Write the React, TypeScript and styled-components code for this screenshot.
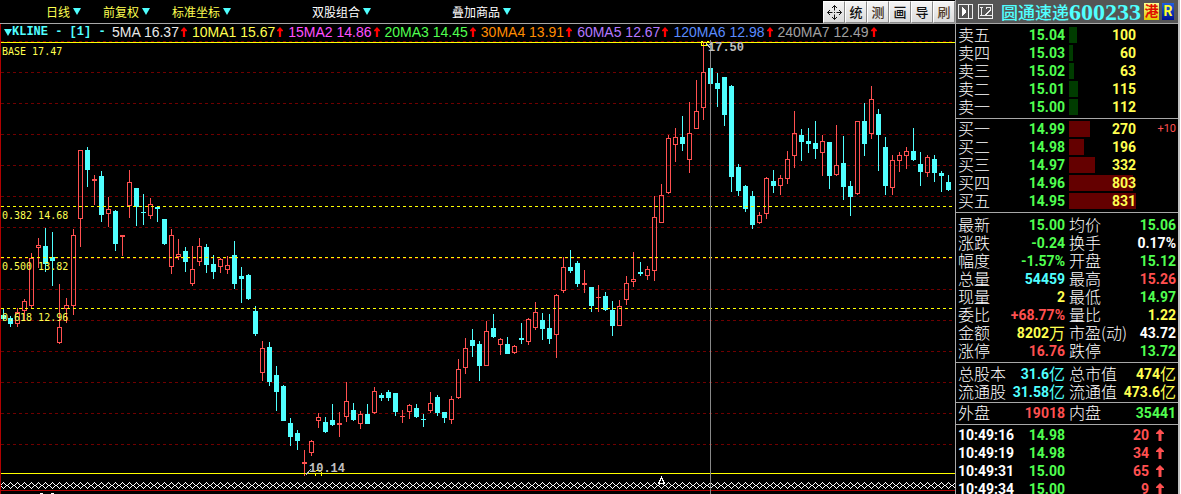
import React from "react";
import styled, { createGlobalStyle } from "styled-components";

const CJK = '"Noto Sans CJK SC", sans-serif';
const NUM = 'Roboto, "Noto Sans CJK SC", sans-serif';

const C = {
  yellow: "#ffff50",
  cyan: "#50ffff",
  green: "#50ff50",
  red: "#ff5050",
  white: "#ffffff",
  line: "#a8a8a8",
  label: "#ffffff",
};

const GlobalStyle = createGlobalStyle`
  * { box-sizing: border-box; }
  html, body { margin: 0; padding: 0; background: #000; }
  button { font: inherit; color: inherit; background: none; border: 0; padding: 0; margin: 0; cursor: pointer; }
  table { border-collapse: collapse; border-spacing: 0; }
  td, th { padding: 0; font-weight: inherit; text-align: left; }
`;

const Screen = styled.div`
  display: flex;
  height: 100vh;
  overflow: hidden;
  background: #000;
  font-family: ${CJK};
`;

const Main = styled.main`
  flex: 1;
  min-width: 0;
  display: flex;
  flex-direction: column;
`;

const TopBar = styled.header`
  flex: none;
  display: flex;
  justify-content: space-between;
  height: 24px;
  border-bottom: 1px solid ${C.line};
`;

const Menu = styled.nav`
  display: flex;
  align-items: center;
  gap: 81px;
  padding-left: 46px;
`;

const MenuGroup = styled.div`
  display: flex;
  gap: 22px;
`;

const MenuButton = styled.button<{ $color: string }>`
  display: flex;
  align-items: center;
  gap: 3px;
  font-size: 12px;
  line-height: 22px;
  white-space: nowrap;
  color: ${(p) => p.$color};
`;

const Caret = styled.span`
  flex: none;
  border: 4px solid transparent;
  border-top: 7px solid ${C.cyan};
  border-bottom: 0;
`;

const Tools = styled.div`
  display: flex;
  padding-top: 1px;
`;

const ToolButton = styled.button<{ $ink: string }>`
  display: flex;
  align-items: center;
  justify-content: center;
  width: 22px;
  height: 22px;
  font-size: 13px;
  line-height: 20px;
  font-weight: 500;
  color: ${(p) => p.$ink};
  background: linear-gradient(#f4f4f4, #dcdcdc);
  border: 1px solid #8a8a8a;
  border-top-color: #fff;
  border-left-color: #fff;
`;

const ChartPane = styled.section`
  flex: 1;
  min-height: 0;
  display: flex;
  flex-direction: column;
  border-left: 1px solid #b00000;
`;

const Legend = styled.div`
  flex: none;
  display: flex;
  align-items: center;
  height: 16px;
  padding-left: 3px;
  font: 14px/16px "Liberation Sans", Arial, sans-serif;
  white-space: pre;
`;

const KlineLabel = styled.button`
  display: flex;
  align-items: center;
  width: 108px;
  font: bold 12px/14px "Liberation Mono", monospace;
  color: ${C.cyan};
`;

const Average = styled.span<{ $color: string }>`
  display: flex;
  align-items: center;
  gap: 2px;
  margin-right: 5px;
  color: ${(p) => p.$color};
`;

const ChartSvg = styled.svg`
  flex: 1;
  min-height: 0;
  width: 100%;
  display: block;
`;

const Side = styled.aside`
  flex: none;
  width: 226px;
  border-left: 1px solid ${C.line};
  border-right: 1px solid #fff;
`;

const SideInner = styled.div`
  min-height: 100%;
  border-right: 2px solid #c0c0c0;
`;

const SideHeader = styled.header`
  display: flex;
  align-items: center;
  height: 24px;
  padding-left: 2px;
  background: #555;
  border-bottom: 1px solid ${C.line};
`;

const IconButton = styled.button`
  display: flex;
  margin-right: 4px;
`;

const StockName = styled.h1`
  display: flex;
  align-items: center;
  margin: 0 3px 0 3px;
  font-size: 17px;
  line-height: 22px;
  font-weight: 500;
  color: ${C.cyan};
  white-space: nowrap;
`;

const StockCode = styled.span`
  font: bold 24px/22px "Liberation Serif", serif;
`;

const Badge = styled.span<{ $from: string; $to: string; $ink: string; $width: number }>`
  width: ${(p) => p.$width}px;
  height: 17px;
  margin-right: 3px;
  text-align: center;
  font: bold 14px/16px ${NUM};
  color: ${(p) => p.$ink};
  background: linear-gradient(${(p) => p.$from}, ${(p) => p.$to});
`;

const Section = styled.section<{ $top: number; $bottom: number }>`
  padding: ${(p) => p.$top}px 2px ${(p) => p.$bottom}px;
  border-bottom: 1px solid ${C.line};
`;

const Book = styled.table`
  display: block;
  font: bold 14px/18px ${NUM};

  tbody { display: block; }
`;

const BookRow = styled.tr`
  display: grid;
  grid-template-columns: 40px 1fr 67px 40px;
  height: 18px;
`;

const BookLabel = styled.th`
  font: 300 16px/16px ${CJK};
  color: ${C.label};
  white-space: nowrap;
`;

const Price = styled.td`
  padding-right: 4px;
  text-align: right;
  color: ${C.green};
`;

const VolumeCell = styled.td<{ $bar: number; $tone: string }>`
  text-align: right;
  color: ${C.yellow};
  background: linear-gradient(${(p) => p.$tone}, ${(p) => p.$tone}) 0 1px / ${(p) => p.$bar}px 16px no-repeat;
`;

const Change = styled.td`
  text-align: right;
  font: 11px/18px ${NUM};
  color: ${C.red};
`;

const Stats = styled.dl`
  display: grid;
  grid-template-columns: 1fr 1fr;
  column-gap: 4px;
  margin: 0;
`;

const Stat = styled.div`
  display: flex;
  justify-content: space-between;
  height: 18px;
  white-space: nowrap;
`;

const StatName = styled.dt`
  font: 300 16px/16px ${CJK};
  color: ${C.label};
`;

const StatValue = styled.dd<{ $color: string }>`
  display: flex;
  margin: 0;
  font: bold 14px/18px ${NUM};
  color: ${(p) => p.$color};
`;

const Unit = styled.span`
  font: 400 16px/16px ${CJK};
`;

const TickRow = styled.tr`
  display: grid;
  grid-template-columns: 60px 51px 80px 1fr;
  height: 18px;
`;

const TickTime = styled.th`
  color: #fff;
`;

const TickVolume = styled.td`
  text-align: right;
  color: ${C.red};
`;

const TickArrow = styled.td`
  display: flex;
  align-items: center;
  padding-left: 7px;
`;

type Dir = "R" | "C";
// direction, high, body top, body bottom, low
type Candle = [Dir, number, number, number, number];

const candles: Candle[] = [
  ["C", 308, 315, 319, 321], ["C", 316, 318, 324, 327], ["R", 308, 312, 324, 327], ["R", 299, 301, 311, 320],
  ["R", 253, 258, 306, 309], ["R", 238, 245, 248, 268], ["C", 228, 246, 264, 272], ["C", 232, 257, 261, 286],
  ["R", 284, 327, 343, 344], ["R", 298, 305, 309, 323], ["R", 229, 235, 306, 315], ["R", 150, 150, 219, 247],
  ["C", 147, 150, 170, 187], ["R", 175, 179, 181, 205], ["C", 171, 176, 215, 222], ["R", 197, 209, 214, 227],
  ["C", 210, 211, 244, 251], ["R", 235, 235, 237, 256], ["R", 170, 182, 206, 218], ["C", 188, 188, 207, 226],
  ["C", 194, 212, 213, 225], ["R", 198, 204, 216, 219], ["C", 207, 207, 209, 222], ["C", 219, 219, 244, 245],
  ["R", 229, 235, 267, 274], ["R", 239, 254, 257, 260], ["C", 247, 251, 262, 272], ["R", 246, 269, 284, 286],
  ["R", 238, 246, 262, 266], ["C", 244, 247, 265, 273], ["C", 255, 264, 272, 279], ["R", 258, 259, 267, 273],
  ["R", 256, 265, 270, 274], ["C", 241, 255, 284, 289], ["C", 267, 276, 279, 303], ["C", 274, 275, 299, 300],
  ["C", 306, 311, 334, 336], ["R", 341, 348, 373, 381], ["C", 342, 347, 382, 386], ["C", 366, 375, 392, 411],
  ["C", 385, 386, 421, 421], ["C", 418, 423, 437, 446], ["C", 430, 433, 441, 450], ["R", 450, 462, 464, 476],
  ["R", 440, 441, 453, 456], ["R", 413, 417, 421, 428], ["C", 417, 422, 432, 433], ["C", 404, 420, 425, 426],
  ["R", 412, 423, 425, 437], ["R", 382, 401, 417, 422], ["C", 403, 410, 420, 421], ["R", 411, 414, 424, 429],
  ["C", 404, 414, 424, 424], ["R", 387, 391, 413, 414], ["C", 393, 395, 398, 401], ["C", 390, 392, 398, 401],
  ["C", 393, 393, 412, 416], ["R", 410, 416, 417, 423], ["R", 404, 405, 412, 419], ["C", 404, 408, 417, 418],
  ["C", 414, 419, 420, 427], ["R", 392, 403, 411, 413], ["C", 395, 397, 413, 416], ["C", 412, 412, 418, 423],
  ["R", 396, 399, 420, 424], ["R", 359, 369, 398, 399], ["R", 338, 348, 368, 374], ["C", 329, 340, 346, 357],
  ["C", 341, 344, 366, 381], ["R", 321, 331, 366, 366], ["C", 314, 328, 337, 338], ["R", 338, 339, 345, 355],
  ["C", 337, 344, 354, 354], ["R", 345, 346, 353, 354], ["C", 323, 338, 340, 344], ["R", 318, 319, 342, 345],
  ["R", 302, 312, 328, 330], ["C", 313, 320, 329, 340], ["C", 314, 328, 339, 344], ["R", 294, 295, 335, 358],
  ["R", 257, 267, 291, 293], ["C", 250, 267, 271, 273], ["C", 261, 263, 284, 287], ["R", 270, 283, 285, 293],
  ["C", 287, 287, 306, 312], ["R", 285, 297, 298, 312], ["C", 292, 296, 310, 311], ["C", 301, 310, 326, 336],
  ["R", 300, 306, 326, 326], ["R", 276, 283, 300, 305], ["R", 252, 279, 282, 287], ["C", 262, 272, 274, 276],
  ["R", 266, 269, 276, 280], ["R", 196, 217, 271, 281], ["R", 184, 195, 223, 223], ["R", 135, 138, 193, 194],
  ["R", 128, 137, 145, 162], ["C", 116, 137, 144, 151], ["R", 102, 133, 160, 173], ["R", 80, 111, 129, 129],
  ["R", 43, 72, 108, 120], ["C", 68, 68, 84, 84], ["C", 73, 83, 89, 107], ["C", 77, 77, 115, 126],
  ["C", 85, 86, 177, 192], ["C", 164, 167, 191, 196], ["C", 185, 186, 209, 212], ["C", 191, 196, 225, 229],
  ["R", 212, 215, 223, 224], ["R", 177, 178, 214, 219], ["C", 170, 181, 186, 193], ["R", 175, 178, 186, 195],
  ["R", 151, 159, 179, 184], ["R", 111, 133, 156, 168], ["C", 129, 135, 142, 161], ["C", 128, 141, 144, 153],
  ["C", 121, 143, 149, 159], ["R", 135, 141, 153, 176], ["C", 142, 142, 176, 189], ["R", 125, 165, 175, 176],
  ["C", 136, 163, 187, 200], ["C", 181, 186, 197, 216], ["R", 121, 121, 194, 195], ["C", 103, 121, 144, 156],
  ["R", 86, 99, 134, 139], ["C", 109, 114, 135, 171], ["C", 137, 147, 186, 195], ["R", 155, 160, 188, 195],
  ["R", 152, 155, 161, 172], ["R", 147, 151, 156, 169], ["C", 128, 151, 160, 161], ["C", 152, 164, 172, 186],
  ["R", 155, 157, 173, 177], ["C", 155, 159, 173, 182], ["C", 171, 173, 176, 192], ["C", 175, 182, 190, 191],
];

const gridLines = [41, 72, 103, 134, 165, 196, 227, 258, 289, 320, 351, 382, 413, 444];

const averages: [string, string][] = [
  ["5MA 16.37", "#e8e8e8"],
  ["10MA1 15.67", "#ffff50"],
  ["15MA2 14.86", "#ff50ff"],
  ["20MA3 14.45", "#50ff50"],
  ["30MA4 13.91", "#ff8c00"],
  ["60MA5 12.67", "#b478ff"],
  ["120MA6 12.98", "#5a8cff"],
  ["240MA7 12.49", "#a0a0a0"],
];

type Level = [string, string, string, number];

const asks: Level[] = [
  ["卖五", "15.04", "100", 8],
  ["卖四", "15.03", "60", 4],
  ["卖三", "15.02", "63", 5],
  ["卖二", "15.01", "115", 9],
  ["卖一", "15.00", "112", 9],
];

const bids: Level[] = [
  ["买一", "14.99", "270", 21],
  ["买二", "14.98", "196", 15],
  ["买三", "14.97", "332", 26],
  ["买四", "14.96", "803", 64],
  ["买五", "14.95", "831", 67],
];

type StatItem = [string, string, string, string?];

const quote: StatItem[] = [
  ["最新", "15.00", C.green], ["均价", "15.06", C.green],
  ["涨跌", "-0.24", C.green], ["换手", "0.17%", C.white],
  ["幅度", "-1.57%", C.green], ["开盘", "15.12", C.green],
  ["总量", "54459", C.cyan], ["最高", "15.26", C.red],
  ["现量", "2", C.yellow], ["最低", "14.97", C.green],
  ["委比", "+68.77%", C.red], ["量比", "1.22", C.yellow],
  ["金额", "8202", C.yellow, "万"], ["市盈(动)", "43.72", C.white],
  ["涨停", "16.76", C.red], ["跌停", "13.72", C.green],
];

const shares: StatItem[] = [
  ["总股本", "31.6", C.cyan, "亿"], ["总市值", "474", C.yellow, "亿"],
  ["流通股", "31.58", C.cyan, "亿"], ["流通值", "473.6", C.yellow, "亿"],
];

const flow: StatItem[] = [
  ["外盘", "19018", C.red], ["内盘", "35441", C.green],
];

const ticks = [
  ["10:49:16", "14.98", "20"],
  ["10:49:19", "14.98", "34"],
  ["10:49:31", "15.00", "65"],
  ["10:49:34", "15.00", "9"],
];

const tools: [string, string][] = [
  ["统", "#111"],
  ["测", "#3c2c1c"],
  ["画", "#111"],
  ["导", "#111"],
  ["刷", "#54402c"],
];

function Arrow({ color, width, height }: { color: string; width: number; height: number }) {
  return (
    <svg width={width} height={height} viewBox="0 0 8 12" preserveAspectRatio="none" aria-hidden="true">
      <path d="M4 0 L8 4 V5 H5.500 V12 H2.500 V5 H0 V4 Z" fill={color} />
    </svg>
  );
}

function CandleShape({ data, x }: { data: Candle; x: number }) {
  const [dir, high, top, bottom, low] = data;
  const color = dir === "R" ? C.red : C.cyan;
  const h = bottom - top;
  const hollow = dir === "R" && h > 2;
  return (
    <g>
      <rect x={x} y={high} width={1} height={top - high} fill={color} />
      <rect x={x} y={bottom} width={1} height={low - bottom} fill={color} />
      {hollow ? (
        <rect x={x - 1.5} y={top + 0.5} width={4} height={h - 1} fill="none" stroke={color} />
      ) : (
        <rect x={x - 2} y={top} width={5} height={h} fill={color} />
      )}
    </g>
  );
}

function Chart() {
  return (
    <ChartSvg role="img" aria-label="KLINE">
      <defs>
        <pattern id="chain" x="0" y="482" width="7" height="7" patternUnits="userSpaceOnUse">
          <path
            d="M3 0h1v1h-1zM2 1h1v1h-1zM4 1h1v1h-1zM1 2h1v1h-1zM5 2h1v1h-1zM0 3h1v1h-1zM6 3h1v1h-1zM1 4h1v1h-1zM5 4h1v1h-1zM2 5h1v1h-1zM4 5h1v1h-1zM3 6h1v1h-1z"
            fill="#fff"
          />
        </pattern>
      </defs>
      <g transform="translate(-1 -40)" shapeRendering="crispEdges">
        {gridLines.map((y) => (
          <line key={y} x1="1" x2="100%" y1={y + 0.5} y2={y + 0.5} stroke="#700000" strokeDasharray="3 3" />
        ))}
        {candles.map((c, i) => (
          <CandleShape key={i} data={c} x={3 + i * 7} />
        ))}
        {[206, 257, 308].map((y) => (
          <line key={y} x1="1" x2="100%" y1={y + 0.5} y2={y + 0.5} stroke="#ffff00" strokeDasharray="3 3" />
        ))}
        <rect x="1" y="42" width="100%" height="1" fill="#ffff00" />
        <rect x="1" y="473" width="100%" height="1" fill="#ffff00" />
        <rect x="1" y="482" width="100%" height="7" fill="url(#chain)" />
        <rect x="1" y="490" width="100%" height="1" fill="#b00000" />
        <rect x="40" y="493" width="3" height="1" fill="#fff" />
        <rect x="51" y="493" width="3" height="1" fill="#fff" />
        <rect x="710" y="40" width="1" height="100%" fill="#888" />
        <path d="M658.5 483.5 L661.5 477.5 L664.5 483.5 Z" fill="#000" stroke="#fff" />
        <path d="M700.5 41.5h2m4 0h2M701.5 42v3.5h5V42" fill="none" stroke="#ffff00" />
        <path d="M706.5 43.5L710.5 48.5" stroke="#c0c0c0" />
        <path d="M305.5 475.5L310.5 469.5" stroke="#c0c0c0" />
        <path d="M315.5 476v-3.5M316 470.5h6M321.5 472v4" fill="none" stroke="#ffff00" />
      </g>
      <g transform="translate(-1 -40)" fill={C.yellow} fontFamily='"DejaVu Sans Mono", monospace' fontSize="10">
        <text x="2" y="55">BASE 17.47</text>
        <text x="2" y="219">0.382 14.68</text>
        <text x="2" y="270">0.500 13.82</text>
        <text x="2" y="321">0.618 12.96</text>
      </g>
      <g transform="translate(-1 -40)" fill="#c0c0c0" fontFamily='"Liberation Mono", monospace' fontSize="12" fontWeight="bold">
        <text x="309" y="472">10.14</text>
        <text x="708" y="51">17.50</text>
      </g>
    </ChartSvg>
  );
}

function OrderRows({ levels, tone, note }: { levels: Level[]; tone: string; note?: string }) {
  return (
    <Book>
      <tbody>
        {levels.map(([name, price, volume, bar], i) => (
          <BookRow key={name}>
            <BookLabel scope="row">{name}</BookLabel>
            <Price>{price}</Price>
            <VolumeCell $bar={bar} $tone={tone}>{volume}</VolumeCell>
            <Change>{i === 0 ? note : null}</Change>
          </BookRow>
        ))}
      </tbody>
    </Book>
  );
}

function StatGrid({ items }: { items: StatItem[] }) {
  return (
    <Stats>
      {items.map(([name, value, color, unit]) => (
        <Stat key={name}>
          <StatName>{name}</StatName>
          <StatValue $color={color}>
            {value}
            {unit && <Unit>{unit}</Unit>}
          </StatValue>
        </Stat>
      ))}
    </Stats>
  );
}

function MenuItem({ text, color }: { text: string; color: string }) {
  return (
    <MenuButton type="button" $color={color}>
      {text}
      <Caret />
    </MenuButton>
  );
}

export default function App() {
  return (
    <Screen>
      <GlobalStyle />
      <Main>
        <TopBar>
          <Menu>
            <MenuGroup>
              <MenuItem text="日线" color={C.yellow} />
              <MenuItem text="前复权" color={C.yellow} />
              <MenuItem text="标准坐标" color={C.yellow} />
            </MenuGroup>
            <MenuItem text="双股组合" color={C.white} />
            <MenuItem text="叠加商品" color={C.white} />
          </Menu>
          <Tools>
            <ToolButton type="button" $ink="#111" aria-label="移动">
              <svg width="15" height="15" viewBox="0 0 15 15" fill="none" stroke="#111">
                <path d="M7.5 0.5v5M7.5 7v1M7.5 9.5v5M0.5 7.5h5M9.5 7.5h5" />
                <path d="M5 3L7.5 0.5L10 3M5 12L7.5 14.5L10 12M3 5L0.5 7.5L3 10M12 5L14.5 7.5L12 10" />
              </svg>
            </ToolButton>
            {tools.map(([text, ink]) => (
              <ToolButton key={text} type="button" $ink={ink}>{text}</ToolButton>
            ))}
          </Tools>
        </TopBar>
        <ChartPane>
          <Legend>
            <KlineLabel type="button">
              <Caret />
              KLINE - [1] -
            </KlineLabel>
            {averages.map(([text, color]) => (
              <Average key={text} $color={color}>
                {text}
                <Arrow color="#ff0000" width={6} height={10} />
              </Average>
            ))}
          </Legend>
          <Chart />
        </ChartPane>
      </Main>
      <Side>
        <SideInner>
          <SideHeader>
            <IconButton type="button" aria-label="展开">
              <svg width="16" height="16" viewBox="0 0 16 16" shapeRendering="crispEdges">
                <rect x="0.5" y="0.5" width="14" height="14" fill="none" stroke="#eee" />
                <path d="M4 3h1v1h1v1h1v1h1v3h-1v1h-1v1h-1v1h-1zM10 1h1v14h-1z" fill="#fff" />
              </svg>
            </IconButton>
            <IconButton type="button" aria-label="Level 2">
              <svg width="16" height="16" viewBox="0 0 16 16" fill="none" stroke="#eee" shapeRendering="crispEdges">
                <rect x="0.5" y="0.5" width="14" height="14" />
                <path d="M2 3.5h3M3.5 3v9M2 11.5h5v-2M8.5 5v-1.500h4v3h-1v1h-1v1h-1v1h-1v2h5" />
              </svg>
            </IconButton>
            <StockName>
              圆通速递<StockCode>600233</StockCode>
            </StockName>
            <Badge $from="#ffff90" $to="#e0c800" $ink="#e01000" $width={15}>港</Badge>
            <Badge $from="#2060e0" $to="#001090" $ink="#ffff30" $width={12}>R</Badge>
          </SideHeader>
          <Section $top={2} $bottom={2}>
            <OrderRows levels={asks} tone="#003c00" />
          </Section>
          <Section $top={1} $bottom={2}>
            <OrderRows levels={bids} tone="#640000" note="+10" />
          </Section>
          <Section $top={3} $bottom={2}>
            <StatGrid items={quote} />
          </Section>
          <Section $top={2} $bottom={1}>
            <StatGrid items={shares} />
          </Section>
          <Section $top={1} $bottom={2}>
            <StatGrid items={flow} />
          </Section>
          <Section $top={1} $bottom={0}>
            <Book>
              <tbody>
                {ticks.map(([time, price, volume]) => (
                  <TickRow key={time}>
                    <TickTime scope="row">{time}</TickTime>
                    <Price>{price}</Price>
                    <TickVolume>{volume}</TickVolume>
                    <TickArrow>
                      <Arrow color={C.red} width={8} height={12} />
                    </TickArrow>
                  </TickRow>
                ))}
              </tbody>
            </Book>
          </Section>
        </SideInner>
      </Side>
    </Screen>
  );
}
